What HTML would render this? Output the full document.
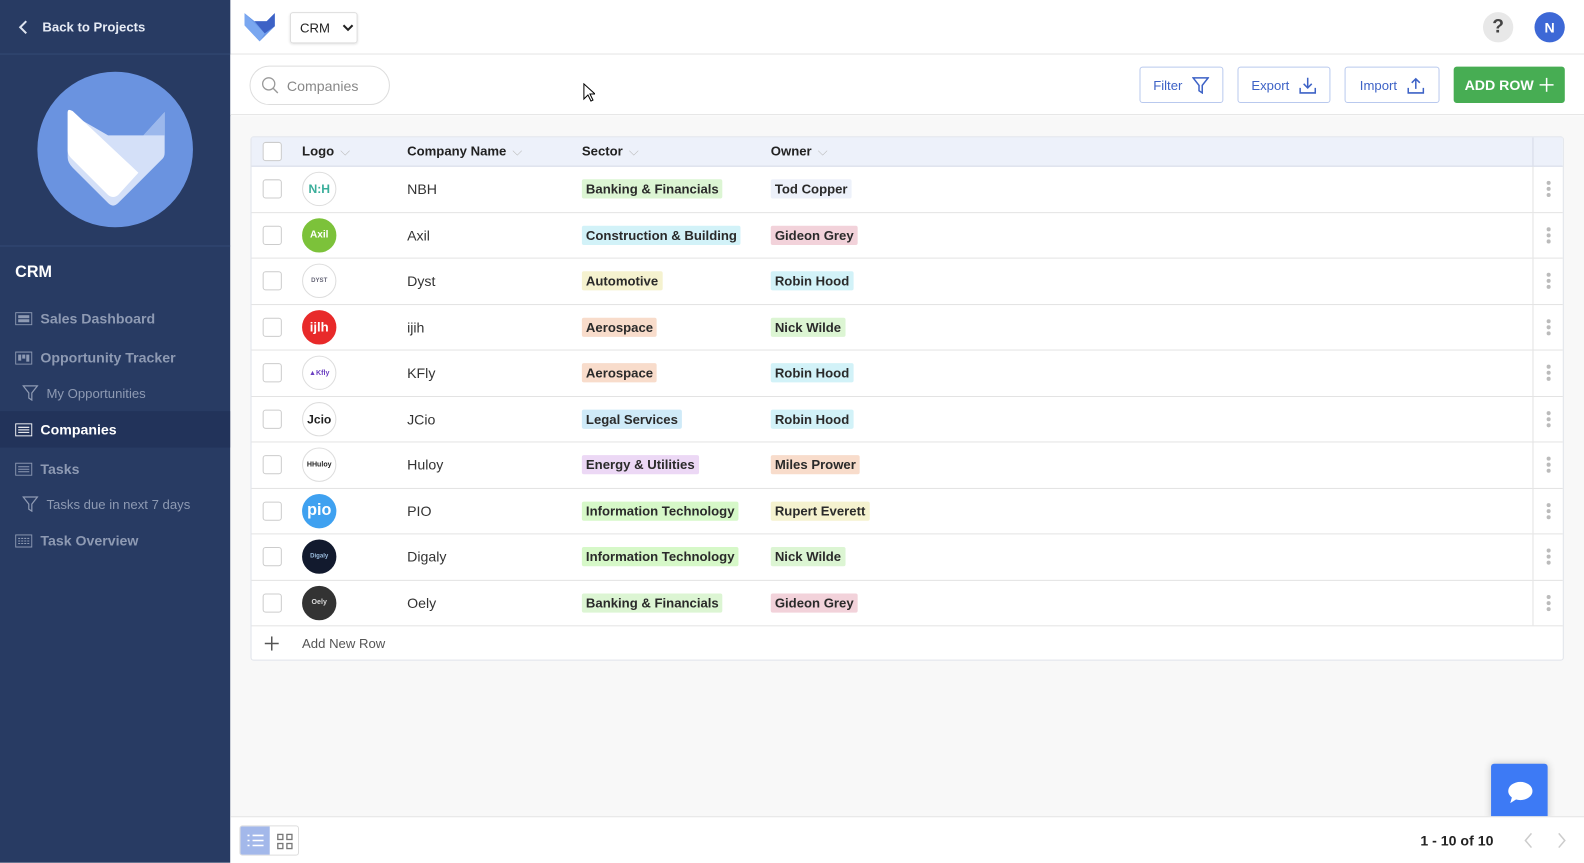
<!DOCTYPE html>
<html><head><meta charset="utf-8"><style>
*{box-sizing:border-box;margin:0;padding:0}
html,body{width:1584px;height:862px;overflow:hidden}
body{font-family:"Liberation Sans",sans-serif;background:#fff;color:#333}
#w{position:absolute;left:0;top:0;width:1568px;height:854px;transform:scale(1.0102);transform-origin:0 0}
.sb{position:absolute;left:0;top:0;width:228px;height:854px;background:#283b63;color:#fff}
.back{height:54px;border-bottom:1px solid #344a75;display:flex;align-items:center;padding-left:18px;font-size:13px;font-weight:bold;color:#e6ebf5}
.back span{margin-left:14px}
.logo{position:absolute;left:37px;top:71px;width:154px;height:154px;border-radius:50%;background:#6a93e0}
.sep{position:absolute;top:243px;left:0;width:228px;border-top:1px solid #344a75}
.crm{position:absolute;top:261px;left:15px;font-size:16px;font-weight:bold}
.item{position:absolute;left:0;width:228px;height:36px;display:flex;align-items:center;padding-left:15px;font-size:14px;font-weight:bold;color:#8e9ab3}
.item.sub{padding-left:22px;font-size:13px;font-weight:normal}
.item.act{background:#22335a;color:#fff}
.item svg{margin-right:8px}
.top{position:absolute;left:228px;top:0;right:0;height:54px;border-bottom:1px solid #e3e3e3}
.crmsel{position:absolute;left:59px;top:12px;width:67px;height:31px;border:1px solid #ddd;border-radius:3px;font-size:13px;display:flex;align-items:center;padding-left:9px;color:#222;box-shadow:0 1px 2px rgba(0,0,0,.1)}
.tool{position:absolute;left:228px;top:54px;right:0;height:60px;border-bottom:1px solid #e3e3e3;background:#fff}
.search{position:absolute;left:19px;top:11px;width:139px;height:39px;border:1px solid #ddd;border-radius:20px;display:flex;align-items:center;padding-left:11px;font-size:14px;color:#888}
.btn{position:absolute;top:12px;height:36px;border:1px solid #b9c9ee;border-radius:3px;display:flex;align-items:center;justify-content:center;font-size:13px;color:#3d62c6;gap:10px}
.content{position:absolute;left:228px;top:115px;right:0;height:693px;background:#f8f8f8}
.tbl{position:absolute;left:20px;top:20px;width:1300px;height:519px;background:#fff;border:1px solid #e0e3ea;border-radius:3px}
.hdr{height:29px;background:#edf1fa;border-bottom:1px solid #d5dae6;position:relative;font-size:13px;font-weight:bold;color:#222}
.row{height:45.5px;border-bottom:1px solid #e3e3e3;position:relative;font-size:14px;color:#333}
.c{position:absolute;top:50%;transform:translateY(-50%);white-space:nowrap}
.cb{left:11px;width:19px;height:19px;border:1px solid #ccc;border-radius:3px;background:#fff}
.lg{left:50px;width:34px;height:34px;border-radius:50%;border:1px solid #ddd;font-size:10px;font-weight:bold;display:flex;align-items:center;justify-content:center;overflow:hidden}
.tag{font-size:13px;font-weight:bold;color:#2a2a2a;padding:2px 4px;border-radius:2px}
.act2{position:absolute;right:0;top:0;width:30px;height:100%;border-left:1px solid #e3e3e3}
.dots{position:absolute;left:13px;top:50%;transform:translateY(-50%);width:4px}
.dots i{display:block;width:4px;height:4px;border-radius:50%;background:#bbb;margin:2px 0}
.arr{display:inline-block;margin-left:6px;color:#bbb;font-weight:normal}
.bot{position:absolute;left:228px;top:808px;right:0;height:46px;background:#fff;border-top:1px solid #e3e3e3}
</style></head><body><div id="w">
<div class="sb">
 <div class="back"><svg width="10" height="14" viewBox="0 0 10 14"><path d="M8 1L2 7l6 6" stroke="#dfe5f0" stroke-width="2" fill="none"/></svg><span>Back to Projects</span></div>
 <div class="logo"><svg width="154" height="154" viewBox="0 0 154 154"><path d="M30 40 L30 85 Q30 90 35 95 L70 130 Q75 135 80 130 L124 86 Q126 84 126 80 L126 40 L105 63 L70 63 Z" fill="#d4e0f8"/><path d="M30 40 Q30 36 35 39 L100 100 L80 122 Q75 126 70 122 L33 85 Q30 82 30 78 Z" fill="#fff"/><path d="M105 63 L126 40 L126 63 Z" fill="#9cb8ec"/></svg></div>
 <div class="sep"></div>
 <div class="crm">CRM</div>
 <div class="item" style="top:297px"><svg width="17" height="13"><rect x=".5" y=".5" width="16" height="12" fill="none" stroke="#8e9ab3"/><rect x="3" y="3" width="11" height="3" fill="#8e9ab3"/><rect x="3" y="7" width="11" height="3" fill="#8e9ab3"/></svg>Sales Dashboard</div>
 <div class="item" style="top:336px"><svg width="17" height="13"><rect x=".5" y=".5" width="16" height="12" fill="none" stroke="#8e9ab3"/><rect x="3" y="3" width="3" height="6" fill="#8e9ab3"/><rect x="7" y="3" width="3" height="4" fill="#8e9ab3"/><rect x="11" y="3" width="3" height="7" fill="#8e9ab3"/></svg>Opportunity Tracker</div>
 <div class="item sub" style="top:371px"><svg width="16" height="16" viewBox="0 0 16 16"><path d="M1 1h14L9.5 8v7l-3-2V8z" fill="none" stroke="#8e9ab3" stroke-width="1.2"/></svg>My Opportunities</div>
 <div class="item act" style="top:407px"><svg width="17" height="13"><rect x=".5" y=".5" width="16" height="12" fill="none" stroke="#fff"/><path d="M3 4h11M3 6.5h11M3 9h11" stroke="#fff"/></svg>Companies</div>
 <div class="item" style="top:446px"><svg width="17" height="13"><rect x=".5" y=".5" width="16" height="12" fill="none" stroke="#8e9ab3"/><path d="M3 4h11M3 6.5h11M3 9h11" stroke="#8e9ab3"/></svg>Tasks</div>
 <div class="item sub" style="top:481px"><svg width="16" height="16" viewBox="0 0 16 16"><path d="M1 1h14L9.5 8v7l-3-2V8z" fill="none" stroke="#8e9ab3" stroke-width="1.2"/></svg>Tasks due in next 7 days</div>
 <div class="item" style="top:517px"><svg width="17" height="13"><rect x=".5" y=".5" width="16" height="12" fill="none" stroke="#8e9ab3"/><path d="M3 4h11M3 6.5h11M3 9h11" stroke="#8e9ab3" stroke-dasharray="2 1"/></svg>Task Overview</div>
</div>
<div class="top">
 <svg style="position:absolute;left:14px;top:13px" width="31" height="28" viewBox="0 0 31 28"><path d="M0 0L0 12L15 28L30 13L30 0L22 8L10 8Z" fill="#6a98e8"/><path d="M0 0L20 20L15 28L0 12Z" fill="#7aa7f0"/><path d="M10 8L22 8L30 0L30 13L20 20Z" fill="#3d62c6"/></svg>
 <div class="crmsel">CRM<svg style="margin-left:12px" width="11" height="8"><path d="M1 1l4.5 4.5L10 1" stroke="#222" stroke-width="2" fill="none"/></svg></div>
 <div style="position:absolute;left:1240px;top:12px;width:30px;height:30px;border-radius:50%;background:#e8e8e8;text-align:center;line-height:30px;font-weight:bold;font-size:19px;color:#444">?</div>
 <div style="position:absolute;left:1291px;top:12px;width:30px;height:30px;border-radius:50%;background:#3d68d6;text-align:center;line-height:30px;font-weight:bold;font-size:14px;color:#fff">N</div>
</div>
<div class="tool">
 <div class="search"><svg width="17" height="17" viewBox="0 0 17 17" style="margin-right:8px"><circle cx="7" cy="7" r="6" stroke="#999" stroke-width="1.3" fill="none"/><path d="M11.5 11.5L16 16" stroke="#999" stroke-width="1.4"/></svg>Companies</div>
 <div class="btn" style="left:900px;width:83px">Filter<svg width="17" height="17" viewBox="0 0 16 16"><path d="M1 1h14L9.5 8v7l-3-2V8z" fill="none" stroke="#3d62c6" stroke-width="1.4"/></svg></div>
 <div class="btn" style="left:997px;width:92px">Export<svg width="17" height="17" viewBox="0 0 17 17"><path d="M8.5 1v10M4.5 7l4 4 4-4M1 11v5h15v-5" stroke="#3d62c6" stroke-width="1.5" fill="none"/></svg></div>
 <div class="btn" style="left:1103px;width:94px">Import<svg width="17" height="17" viewBox="0 0 17 17"><path d="M8.5 12V2M4.5 6l4-4 4 4M1 11v5h15v-5" stroke="#3d62c6" stroke-width="1.5" fill="none"/></svg></div>
 <div class="btn" style="left:1211px;width:110px;background:#47ad53;border-color:#47ad53;color:#fff;font-weight:bold;font-size:14px;gap:6px">ADD ROW<svg width="14" height="14"><path d="M7 0v14M0 7h14" stroke="#fff" stroke-width="1.5"/></svg></div>
</div>
<div class="content">
 <div class="tbl">
  <div class="hdr"><div class="c cb"></div><div class="c" style="left:50px">Logo<span class="arr">⌵</span></div><div class="c" style="left:154px">Company Name<span class="arr">⌵</span></div><div class="c" style="left:327px">Sector<span class="arr">⌵</span></div><div class="c" style="left:514px">Owner<span class="arr">⌵</span></div><div class="act2" style="border-color:#d5dae6"></div></div>
  <div class="row"><div class="c cb"></div><div class="c lg" style="color:#3aae9a;font-size:12px">N:H</div><div class="c" style="left:154px">NBH</div><div class="c tag" style="left:327px;background:#dcf5d3">Banking &amp; Financials</div><div class="c tag" style="left:514px;background:#edf1fa">Tod Copper</div><div class="act2"><div class="dots"><i></i><i></i><i></i></div></div></div>
  <div class="row"><div class="c cb"></div><div class="c lg" style="background:#7cc23a;color:#fff;border-color:#7cc23a">Axil</div><div class="c" style="left:154px">Axil</div><div class="c tag" style="left:327px;background:#d2f2f8">Construction &amp; Building</div><div class="c tag" style="left:514px;background:#f2d2da">Gideon Grey</div><div class="act2"><div class="dots"><i></i><i></i><i></i></div></div></div>
  <div class="row"><div class="c cb"></div><div class="c lg" style="color:#667;font-size:6px">DYST</div><div class="c" style="left:154px">Dyst</div><div class="c tag" style="left:327px;background:#f5f2cf">Automotive</div><div class="c tag" style="left:514px;background:#d2f2f8">Robin Hood</div><div class="act2"><div class="dots"><i></i><i></i><i></i></div></div></div>
  <div class="row"><div class="c cb"></div><div class="c lg" style="background:#e82a2a;color:#fff;border-color:#e82a2a;font-size:13px">ijlh</div><div class="c" style="left:154px">ijih</div><div class="c tag" style="left:327px;background:#f8dccb">Aerospace</div><div class="c tag" style="left:514px;background:#dcf5d3">Nick Wilde</div><div class="act2"><div class="dots"><i></i><i></i><i></i></div></div></div>
  <div class="row"><div class="c cb"></div><div class="c lg" style="color:#6a3ec0;font-size:7px">▲Kfly</div><div class="c" style="left:154px">KFly</div><div class="c tag" style="left:327px;background:#f8dccb">Aerospace</div><div class="c tag" style="left:514px;background:#d2f2f8">Robin Hood</div><div class="act2"><div class="dots"><i></i><i></i><i></i></div></div></div>
  <div class="row"><div class="c cb"></div><div class="c lg" style="color:#222;font-size:12px">Jcio</div><div class="c" style="left:154px">JCio</div><div class="c tag" style="left:327px;background:#cfeaf8">Legal Services</div><div class="c tag" style="left:514px;background:#d2f2f8">Robin Hood</div><div class="act2"><div class="dots"><i></i><i></i><i></i></div></div></div>
  <div class="row"><div class="c cb"></div><div class="c lg" style="color:#222;font-size:7px">HHuloy</div><div class="c" style="left:154px">Huloy</div><div class="c tag" style="left:327px;background:#ecd8f5">Energy &amp; Utilities</div><div class="c tag" style="left:514px;background:#f8dccb">Miles Prower</div><div class="act2"><div class="dots"><i></i><i></i><i></i></div></div></div>
  <div class="row"><div class="c cb"></div><div class="c lg" style="background:#3fa1f0;color:#fff;border-color:#3fa1f0;font-size:16px">pio</div><div class="c" style="left:154px">PIO</div><div class="c tag" style="left:327px;background:#d6f8c8">Information Technology</div><div class="c tag" style="left:514px;background:#f5f2cf">Rupert Everett</div><div class="act2"><div class="dots"><i></i><i></i><i></i></div></div></div>
  <div class="row"><div class="c cb"></div><div class="c lg" style="background:#121a2e;color:#9bd;border-color:#121a2e;font-size:6px">Digaly</div><div class="c" style="left:154px">Digaly</div><div class="c tag" style="left:327px;background:#d6f8c8">Information Technology</div><div class="c tag" style="left:514px;background:#dcf5d3">Nick Wilde</div><div class="act2"><div class="dots"><i></i><i></i><i></i></div></div></div>
  <div class="row"><div class="c cb"></div><div class="c lg" style="background:#333;color:#ddd;border-color:#333;font-size:7px">Oely</div><div class="c" style="left:154px">Oely</div><div class="c tag" style="left:327px;background:#dcf5d3">Banking &amp; Financials</div><div class="c tag" style="left:514px;background:#f2d2da">Gideon Grey</div><div class="act2"><div class="dots"><i></i><i></i><i></i></div></div></div>
  <div style="height:34px;position:relative;font-size:13px;color:#555"><svg class="c" style="left:13px" width="14" height="14"><path d="M7 0v14M0 7h14" stroke="#555" stroke-width="1.5"/></svg><div class="c" style="left:50px">Add New Row</div></div>
 </div>
 <div style="position:absolute;left:1248px;top:641px;width:56px;height:56px;border-radius:3px;background:#3d7af5;box-shadow:0 0 8px rgba(0,0,0,.2)"><svg style="position:absolute;left:16px;top:17px" width="26" height="24" viewBox="0 0 26 24"><ellipse cx="13" cy="10" rx="12" ry="9" fill="#fff"/><path d="M5 15L3 22L11 17Z" fill="#fff"/></svg></div>
</div>
<div class="bot">
 <div style="position:absolute;left:9px;top:8px;width:59px;height:30px;border:1px solid #ddd;border-radius:3px;overflow:hidden"><div style="position:absolute;left:0;top:0;width:29px;height:30px;background:#a3b8ea"><svg style="position:absolute;left:7px;top:8px" width="16" height="13"><path d="M0 1h2M0 6h2M0 11h2M5 1h11M5 6h11M5 11h11" stroke="#fff" stroke-width="1.5"/></svg></div><svg style="position:absolute;left:36px;top:7px" width="16" height="16"><rect x="1" y="1" width="5" height="5" fill="none" stroke="#777" stroke-width="1.3"/><rect x="10" y="1" width="5" height="5" fill="none" stroke="#777" stroke-width="1.3"/><rect x="1" y="10" width="5" height="5" fill="none" stroke="#777" stroke-width="1.3"/><rect x="10" y="10" width="5" height="5" fill="none" stroke="#777" stroke-width="1.3"/></svg></div>
 <div style="position:absolute;left:1178px;top:15px;font-size:14px;font-weight:bold;color:#222">1 - 10 of 10</div>
 <svg style="position:absolute;left:1280px;top:15px" width="10" height="16"><path d="M8 1L2 8l6 7" stroke="#ccc" stroke-width="1.5" fill="none"/></svg>
 <svg style="position:absolute;left:1313px;top:15px" width="10" height="16"><path d="M2 1l6 7-6 7" stroke="#ccc" stroke-width="1.5" fill="none"/></svg>
</div>
<svg style="position:absolute;left:577px;top:82px" width="12" height="19" viewBox="0 0 12 19"><path d="M1 1v15l4-4 3 6 2-1-3-6h5z" fill="#fff" stroke="#000"/></svg>
</div></body></html>
